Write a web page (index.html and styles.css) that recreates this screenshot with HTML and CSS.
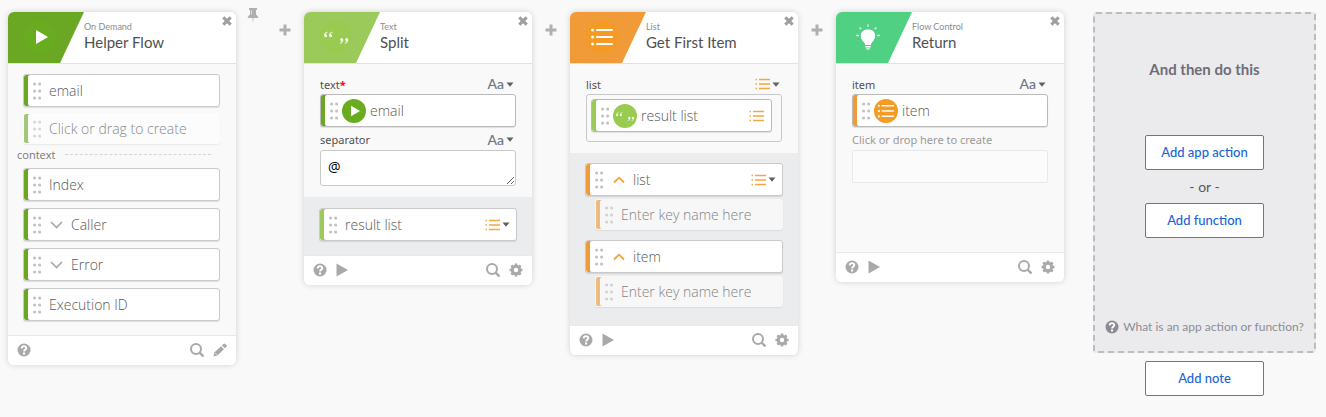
FILE: index.html
```html
<!DOCTYPE html>
<html lang="en">
<head>
<meta charset="utf-8">
<meta name="viewport" content="width=device-width, initial-scale=1">
<title>Helper Flow</title>
<link rel="stylesheet" href="styles.css">
</head>
<body>
<svg class="sprite" aria-hidden="true">
  <symbol id="close" viewBox="0 0 10 10"><path d="M2.4.2 5 2.8 7.600.2 9.800 2.400 7.200 5 9.800 7.600 7.600 9.800 5 7.200 2.400 9.800.2 7.600 2.800 5 .2 2.400z" fill="currentColor"/></symbol>
  <symbol id="pin" viewBox="0 0 12 16"><path d="M2 0h8v2H9v4.500q2 1 2.500 3.500h-5L6 15.500 5.500 10h-5Q1 7.500 3 6.500V2H2z" fill="currentColor"/><path d="M4.500 2.500v4" stroke="#ddd"/></symbol>
  <symbol id="plus" viewBox="0 0 12 12"><path d="M4.500.5h3v4h4v3h-4v4h-3v-4h-4v-3h4z" fill="currentColor"/></symbol>
  <symbol id="grip" viewBox="0 0 8 18"><g fill="#c3c3c3"><circle cx="1.600" cy="2" r="1.600"/><circle cx="6.600" cy="2" r="1.600"/><circle cx="1.600" cy="9" r="1.600"/><circle cx="6.600" cy="9" r="1.600"/><circle cx="1.600" cy="16" r="1.600"/><circle cx="6.600" cy="16" r="1.600"/></g></symbol>
  <symbol id="down" viewBox="0 0 14 8"><path d="m2 1 5.500 5.500L13 1" fill="none" stroke="currentColor" stroke-width="1.600"/></symbol>
  <symbol id="up" viewBox="0 0 14 8"><path d="m3 6.500 5-4.800 5 4.800" fill="none" stroke="currentColor" stroke-width="1.800"/></symbol>
  <symbol id="caret" viewBox="0 0 8 5"><path d="M.5.5h7L4 4.700z" fill="currentColor"/></symbol>
  <symbol id="list" viewBox="0 0 15 12"><path d="M4 1.500h11M4 6h11M4 10.500h11M.5 1.500H2M.5 6H2M.5 10.500H2" stroke="currentColor" stroke-width="1.400"/></symbol>
  <symbol id="help" viewBox="0 0 14 14"><circle cx="7" cy="7" r="6.500" fill="currentColor"/><path d="M4.700 5.400C4.800 2.300 9.400 2.500 9.300 5.200 9.200 6.700 7.100 6.600 7.100 8.500" fill="none" stroke="#fff" stroke-width="1.900"/><path d="M6 9.500h2.100v2H6z" fill="#fff"/></symbol>
  <symbol id="run" viewBox="0 0 12 14"><path d="M.5.5 12 7 .5 13.500z" fill="currentColor"/></symbol>
  <symbol id="search" viewBox="0 0 14 14"><circle cx="6" cy="6" r="5" fill="none" stroke="currentColor" stroke-width="2"/><path d="m9.500 9.500 4 4" stroke="currentColor" stroke-width="2.400"/></symbol>
  <symbol id="pencil" viewBox="0 0 14 14"><path d="m.5 13.500.8-4 6.700-6.300 3 3L4.400 12.600zM8.900 2.400l1.400-1.400q1-1 2 0l1 1q1 1 0 2l-1.400 1.300z" fill="currentColor"/><path d="m2.300 10.200 1.700 1.700" stroke="#fff" stroke-width=".8"/></symbol>
  <symbol id="gear" viewBox="0 0 14 14"><circle cx="7" cy="7" r="3.700" fill="none" stroke="currentColor" stroke-width="3"/><path d="M7 .5v2.300M7 11.200v2.300M.5 7h2.300M11.200 7h2.300M2.400 2.400 4 4M10 10l1.600 1.600M11.600 2.400 10 4M4 10l-1.600 1.600" stroke="currentColor" stroke-width="2.600"/></symbol>
  <symbol id="app-play" viewBox="0 0 32 32"><circle cx="16" cy="16" r="16" fill="#6aac1f"/><path d="M12 9v14l12-7z" fill="#fff"/></symbol>
  <symbol id="app-text" viewBox="0 0 32 32"><circle cx="16" cy="16" r="16" fill="#98cb4f"/><path d="M7.500 10.500Q4 11.500 4 14.500q0 1.800 1.700 1.800 1.500 0 1.500-1.500T5.700 13.300q.3-1.300 2-2zM12.500 10.500Q9 11.500 9 14.500q0 1.800 1.700 1.800 1.500 0 1.500-1.500t-1.500-1.500q.3-1.300 2-2zM19.800 22.800q3.500-1 3.500-4 0-1.800-1.700-1.800-1.500 0-1.500 1.500t1.500 1.500q-.3 1.300-2 2zM24.800 22.800q3.500-1 3.500-4 0-1.800-1.700-1.800-1.500 0-1.500 1.500t1.500 1.500q-.3 1.300-2 2z" fill="#fff" fill-opacity=".88"/></symbol>
  <symbol id="app-list" viewBox="0 0 32 32"><circle cx="16" cy="16" r="16" fill="#f59a23"/><path d="M11 9h15M11 16h15M11 23h15" stroke="#fff" stroke-width="2.200" stroke-linecap="round"/><g fill="#fff"><circle cx="6.500" cy="9" r="1.500"/><circle cx="6.500" cy="16" r="1.500"/><circle cx="6.500" cy="23" r="1.500"/></g></symbol>
  <symbol id="app-bulb" viewBox="0 0 32 32"><path d="M16 8.500c-9 0-8.500 9-4.300 12.500q1.300 1.200 1.300 3h6q0-1.800 1.300-3C24.500 17.500 25 8.500 16 8.500zM13.300 25h5.400v1.500h-5.400zM14.300 27.200h3.400v1.300h-3.400z" fill="#fff"/><path d="M16 3.500v2.300M7.500 6.500 9.300 8.300M24.500 6.500l-1.800 1.800M4 14.500h3M25 14.500h3" stroke="#d7f5e3" stroke-width="1.400"/></symbol>
</svg>

<main class="flow">
  <section class="card dark-green">
    <header class="head">
      <div class="flag"><svg class="app-icon"><use href="#app-play"/></svg></div>
      <div class="titles"><p class="app">On Demand</p><h2 class="title">Helper Flow</h2></div>
      <button class="close" aria-label="Remove Helper Flow"><svg class="i10"><use href="#close"/></svg></button>
    </header>
    <div class="body inputs">
      <div class="chip"><svg class="grip"><use href="#grip"/></svg><span class="name">email</span></div>
      <div class="chip ghost"><svg class="grip"><use href="#grip"/></svg><input class="name" aria-label="New input" placeholder="Click or drag to create"></div>
      <h3 class="divider">context</h3>
      <div class="stack">
        <div class="chip"><svg class="grip"><use href="#grip"/></svg><span class="name">Index</span></div>
        <div class="chip"><svg class="grip"><use href="#grip"/></svg><button class="fold" aria-label="Expand Caller"><svg class="chev"><use href="#down"/></svg></button><span class="name">Caller</span></div>
        <div class="chip"><svg class="grip"><use href="#grip"/></svg><button class="fold" aria-label="Expand Error"><svg class="chev"><use href="#down"/></svg></button><span class="name">Error</span></div>
        <div class="chip"><svg class="grip"><use href="#grip"/></svg><span class="name">Execution ID</span></div>
      </div>
    </div>
    <footer class="foot">
      <button aria-label="Help"><svg class="i14"><use href="#help"/></svg></button>
      <span class="space"></span>
      <button aria-label="Search"><svg class="i14"><use href="#search"/></svg></button>
      <button aria-label="Edit"><svg class="i14"><use href="#pencil"/></svg></button>
    </footer>
  </section>

  <div class="link">
    <button class="pin" aria-label="Pin card"><svg class="pin-icon"><use href="#pin"/></svg></button>
    <button class="plus" aria-label="Add card"><svg class="i12"><use href="#plus"/></svg></button>
  </div>

  <section class="card light-green">
    <header class="head">
      <div class="flag"><svg class="app-icon"><use href="#app-text"/></svg></div>
      <div class="titles"><p class="app">Text</p><h2 class="title">Split</h2></div>
      <button class="close" aria-label="Remove Split"><svg class="i10"><use href="#close"/></svg></button>
    </header>
    <div class="body fields">
      <div class="row"><span class="label">text<span class="req">*</span></span><button class="type" aria-label="Type: text">Aa<svg class="caret"><use href="#caret"/></svg></button></div>
      <div class="chip ref dark-green"><svg class="grip"><use href="#grip"/></svg><svg class="badge"><use href="#app-play"/></svg><span class="name">email</span></div>
      <div class="row"><label class="label" for="separator">separator</label><button class="type" aria-label="Type: text">Aa<svg class="caret"><use href="#caret"/></svg></button></div>
      <textarea id="separator" class="area">@</textarea>
    </div>
    <div class="outputs">
      <div class="chip"><svg class="grip"><use href="#grip"/></svg><span class="name">result list</span><button class="type" aria-label="Type: list"><svg class="list"><use href="#list"/></svg><svg class="caret"><use href="#caret"/></svg></button></div>
    </div>
    <footer class="foot">
      <button aria-label="Help"><svg class="i14"><use href="#help"/></svg></button>
      <button aria-label="Run"><svg class="i14"><use href="#run"/></svg></button>
      <span class="space"></span>
      <button aria-label="Search"><svg class="i14"><use href="#search"/></svg></button>
      <button aria-label="Settings"><svg class="i14"><use href="#gear"/></svg></button>
    </footer>
  </section>

  <div class="link"><button class="plus" aria-label="Add card"><svg class="i12"><use href="#plus"/></svg></button></div>

  <section class="card orange">
    <header class="head">
      <div class="flag"><svg class="app-icon"><use href="#app-list"/></svg></div>
      <div class="titles"><p class="app">List</p><h2 class="title">Get First Item</h2></div>
      <button class="close" aria-label="Remove Get First Item"><svg class="i10"><use href="#close"/></svg></button>
    </header>
    <div class="body fields">
      <div class="row"><span class="label">list</span><button class="type" aria-label="Type: list"><svg class="list"><use href="#list"/></svg><svg class="caret"><use href="#caret"/></svg></button></div>
      <div class="slot">
        <div class="chip ref light-green"><svg class="grip"><use href="#grip"/></svg><svg class="badge"><use href="#app-text"/></svg><span class="name">result list</span><svg class="list"><use href="#list"/></svg></div>
      </div>
    </div>
    <div class="outputs tree">
      <div class="chip"><svg class="grip"><use href="#grip"/></svg><button class="fold accent" aria-label="Collapse list"><svg class="chev"><use href="#up"/></svg></button><span class="name">list</span><button class="type" aria-label="Type: list"><svg class="list"><use href="#list"/></svg><svg class="caret"><use href="#caret"/></svg></button></div>
      <div class="chip ghost child"><svg class="grip"><use href="#grip"/></svg><input class="name" aria-label="New key in list" placeholder="Enter key name here"></div>
      <div class="chip"><svg class="grip"><use href="#grip"/></svg><button class="fold accent" aria-label="Collapse item"><svg class="chev"><use href="#up"/></svg></button><span class="name">item</span></div>
      <div class="chip ghost child"><svg class="grip"><use href="#grip"/></svg><input class="name" aria-label="New key in item" placeholder="Enter key name here"></div>
    </div>
    <footer class="foot">
      <button aria-label="Help"><svg class="i14"><use href="#help"/></svg></button>
      <button aria-label="Run"><svg class="i14"><use href="#run"/></svg></button>
      <span class="space"></span>
      <button aria-label="Search"><svg class="i14"><use href="#search"/></svg></button>
      <button aria-label="Settings"><svg class="i14"><use href="#gear"/></svg></button>
    </footer>
  </section>

  <div class="link"><button class="plus" aria-label="Add card"><svg class="i12"><use href="#plus"/></svg></button></div>

  <section class="card teal">
    <header class="head">
      <div class="flag"><svg class="app-icon"><use href="#app-bulb"/></svg></div>
      <div class="titles"><p class="app">Flow Control</p><h2 class="title">Return</h2></div>
      <button class="close" aria-label="Remove Return"><svg class="i10"><use href="#close"/></svg></button>
    </header>
    <div class="body fields roomy">
      <div class="row"><span class="label">item</span><button class="type" aria-label="Type: text">Aa<svg class="caret"><use href="#caret"/></svg></button></div>
      <div class="chip ref orange"><svg class="grip"><use href="#grip"/></svg><svg class="badge"><use href="#app-list"/></svg><span class="name">item</span></div>
      <div class="row"><label class="label muted" for="new-field">Click or drop here to create</label></div>
      <input id="new-field" class="drop">
    </div>
    <footer class="foot">
      <button aria-label="Help"><svg class="i14"><use href="#help"/></svg></button>
      <button aria-label="Run"><svg class="i14"><use href="#run"/></svg></button>
      <span class="space"></span>
      <button aria-label="Search"><svg class="i14"><use href="#search"/></svg></button>
      <button aria-label="Settings"><svg class="i14"><use href="#gear"/></svg></button>
    </footer>
  </section>

  <aside class="next">
    <div class="panel">
      <h2 class="prompt">And then do this</h2>
      <button class="action">Add app action</button>
      <span class="or">- or -</span>
      <button class="action">Add function</button>
      <a class="what" href="#"><svg class="i14"><use href="#help"/></svg>What is an app action or function?</a>
    </div>
    <button class="action">Add note</button>
  </aside>
</main>
</body>
</html>
```

FILE: styles.css
```css
* { box-sizing: border-box; }
body {
  margin: 0;
  background: #f9f9f9;
  color: #585858;
  font-family: "Open Sans", "Noto Sans", sans-serif;
  font-size: 14px;
}
h2, h3, p { margin: 0; font-weight: 400; }
button, input, textarea { font: inherit; color: inherit; }
button { padding: 0; border: 0; background: none; cursor: pointer; }
svg { display: block; flex: none; }
.sprite { position: absolute; width: 0; height: 0; }

.dark-green { --accent: #6aa722; }
.light-green { --accent: #9bca5b; }
.orange { --accent: #f09a38; }
.teal { --accent: #4fd083; }

.i10 { width: 10px; height: 10px; }
.i12 { width: 12px; height: 12px; }
.i14 { width: 14px; height: 14px; }

.flow { display: flex; align-items: flex-start; padding: 12px 10px 16px 8px; }

.card {
  flex: 1 1 228px;
  min-width: 200px;
  border-radius: 6px;
  background: #f9f9f9;
  box-shadow: 0 0 6px rgba(0, 0, 0, 0.16);
  overflow: hidden;
}
.head { display: flex; height: 52px; border-bottom: 1px solid #e2e2e2; background: #fff; }
.flag {
  width: 76px;
  padding: 9px 0 0 16px;
  background: var(--accent);
  clip-path: polygon(0 0, 100% 0, 52px 100%, 0 100%);
}
.app-icon { width: 32px; height: 32px; }
.titles { flex: 1; padding-top: 9px; font-family: Lato, sans-serif; }
.app { color: #8c8c8c; font-size: 9px; line-height: 12px; }
.title { color: #505050; font-size: 15px; line-height: 18px; }
.close { align-self: flex-start; padding: 4px; color: #a0a0a0; }

.inputs { padding: 10px 16px 14px 15px; }
.fields { padding: 12px 16px 11px; }
.roomy { padding-bottom: 69px; }
.outputs { padding: 11px 15px 14px; background: #ebecee; }
.tree { padding: 10px 15px 18px; }

.chip {
  display: flex;
  align-items: center;
  gap: 8px;
  height: 33px;
  padding: 0 6px 0 9px;
  border: 1px solid #cacaca;
  border-radius: 3px;
  background: #fff;
  box-shadow: inset 4px 0 var(--accent), 0 1px 1px rgba(0, 0, 0, 0.1);
}
.grip { width: 8px; height: 18px; }
.name { flex: 1; min-width: 0; padding: 0; border: 0; background: none; font-weight: 300; }
.name::placeholder { color: #383838; opacity: 1; }
.ref { gap: 4px; padding-right: 8px; border-color: #bbb; }
.badge { width: 24px; height: 24px; }
.ghost { height: 31px; margin-top: 6px; border-color: transparent; opacity: 0.6; }
.child { margin: 3px 0 10px 10px; }
.child:last-child { margin-bottom: 0; }
.fold { color: #a8a8a8; }
.accent { color: #f5a23c; }
.chev { width: 14px; height: 8px; }
.stack { display: grid; gap: 7px; }
.divider {
  display: flex;
  align-items: center;
  gap: 10px;
  height: 24px;
  padding: 0 9px 4px 0;
  margin-left: -6px;
  color: #777;
  font-size: 11px;
}
.divider::after { content: ""; flex: 1; border-top: 1px dashed #d4d4d4; }

.row { display: flex; align-items: center; justify-content: space-between; height: 18px; padding: 0 2px 2px 0; }
.chip + .row { height: 23px; padding-top: 4px; }
.label { color: #505050; font-family: "Noto Sans", "Open Sans", sans-serif; font-size: 11px; }
.req { color: #f00; font-weight: 700; line-height: 11px; }
.muted { color: #999; }
.type { display: flex; align-items: center; gap: 2px; color: #6b7480; font-family: Lato, sans-serif; font-size: 14px; line-height: 14px; font-weight: 500; }
.caret { width: 8px; height: 5px; color: #606060; }
.list { width: 15px; height: 12px; color: #f5a742; }
.area {
  display: block;
  width: 100%;
  height: 36px;
  padding: 7px;
  border: 1px solid #c8c8c8;
  border-radius: 3px;
  background: #fff;
  color: #000;
  line-height: 18px;
  overflow: hidden;
  resize: vertical;
}
.slot { height: 48px; padding: 4px 9px 0 4px; border: 1px solid #c8c8c8; border-radius: 3px; }
.slot .list { margin-right: -1px; }
.drop { display: block; width: 100%; height: 33px; border: 1px solid #e9e9e9; border-radius: 2px; background: #fbfbfb; }

.foot {
  display: flex;
  align-items: center;
  gap: 8px;
  height: 30px;
  padding: 0 9px 2px;
  border-top: 1px solid #e8e8e8;
  background: #fff;
  color: #a9a9a9;
}
.space { flex: 1; }
.foot button:last-child { margin-left: 1px; }

.link { display: flex; flex: none; align-items: flex-start; color: #b0b0b0; }
.pin { width: 30px; padding: 0 7px 0 11px; margin-top: -4px; }
.pin-icon { width: 12px; height: 16px; }
.plus { width: 38px; padding: 12px 13px; }

.next { display: flex; flex: 1 1 223px; min-width: 200px; flex-direction: column; align-items: center; gap: 8px; margin-left: 29px; }
.panel {
  display: flex;
  flex-direction: column;
  align-items: center;
  width: 100%;
  padding: 45px 4px 15px;
  border: 2px dashed #bdbdbd;
  border-radius: 3px;
  background: #ebebed;
  font-family: Lato, sans-serif;
}
.prompt { margin-bottom: 56px; color: #6d6d78; font-size: 15px; line-height: 20px; font-weight: 700; }
.action {
  width: 119px;
  height: 35px;
  padding-bottom: 2px;
  border: 1px solid #3d7de0;
  border-radius: 2px;
  background: #fff;
  color: #1b62d8;
  font-family: Lato, sans-serif;
  font-size: 13px;
  font-weight: 500;
}
.or { line-height: 33px; }
.what { display: flex; align-items: center; gap: 4px; margin-top: 80px; color: #8b8b95; font-size: 12px; line-height: 18px; text-decoration: none; white-space: nowrap; }
```
